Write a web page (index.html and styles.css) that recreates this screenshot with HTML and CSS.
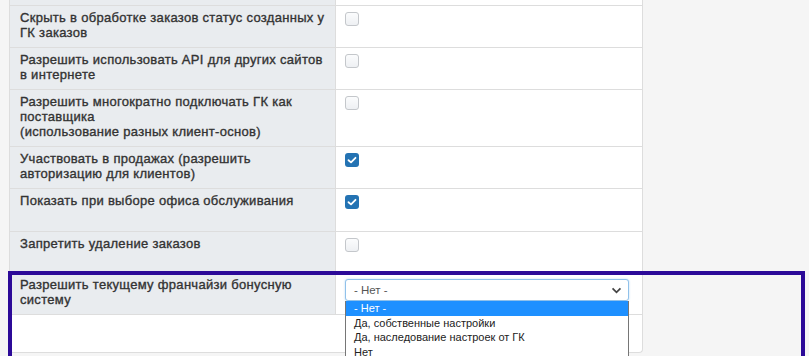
FILE: index.html
```html
<!DOCTYPE html>
<html lang="ru">
<head>
<meta charset="utf-8">
<title>Настройки</title>
<link rel="stylesheet" href="styles.css">
</head>
<body>
<div class="panel">
  <table class="settings">
    <tr class="cut"><td class="lbl"></td><td class="val"></td></tr>
    <tr>
      <td class="lbl"><div class="txt">Скрыть в обработке заказов статус созданных у ГК заказов</div></td>
      <td class="val"><span class="cb"></span></td>
    </tr>
    <tr>
      <td class="lbl"><div class="txt">Разрешить использовать API для других сайтов в интернете</div></td>
      <td class="val"><span class="cb"></span></td>
    </tr>
    <tr>
      <td class="lbl"><div class="txt">Разрешить многократно подключать ГК как поставщика<br>(использование разных клиент-основ)</div></td>
      <td class="val"><span class="cb"></span></td>
    </tr>
    <tr>
      <td class="lbl"><div class="txt">Участвовать в продажах (разрешить авторизацию для клиентов)</div></td>
      <td class="val"><span class="cb on"><svg viewBox="0 0 14 14" width="14" height="14"><polyline points="3.5,7.2 6,9.4 10.5,4.8" fill="none" stroke="#fff" stroke-width="1.8" stroke-linecap="round" stroke-linejoin="round"/></svg></span></td>
    </tr>
    <tr>
      <td class="lbl"><div class="txt tall">Показать при выборе офиса обслуживания</div></td>
      <td class="val"><span class="cb on"><svg viewBox="0 0 14 14" width="14" height="14"><polyline points="3.5,7.2 6,9.4 10.5,4.8" fill="none" stroke="#fff" stroke-width="1.8" stroke-linecap="round" stroke-linejoin="round"/></svg></span></td>
    </tr>
    <tr>
      <td class="lbl"><div class="txt short">Запретить удаление заказов</div></td>
      <td class="val"><span class="cb"></span></td>
    </tr>
    <tr>
      <td class="lbl"><div class="txt">Разрешить текущему франчайзи бонусную систему</div></td>
      <td class="val">
        <div class="select-wrap">
          <div class="select">
            <span>- Нет -</span>
            <svg class="chev" viewBox="0 0 12 8" width="11" height="7"><polyline points="1.5,1.5 6,6 10.5,1.5" fill="none" stroke="#444" stroke-width="2"/></svg>
          </div>
          <ul class="options">
            <li class="sel">- Нет -</li>
            <li>Да, собственные настройки</li>
            <li>Да, наследование настроек от ГК</li>
            <li>Нет</li>
          </ul>
        </div>
      </td>
    </tr>
  </table>
  <div class="footer"></div>
</div>
<div class="highlight"></div>
</body>
</html>
```
FILE: styles.css
```css
html, body {
  margin: 0;
  padding: 0;
}
body {
  background: #f5f5f5;
  font-family: "Liberation Sans", Arial, sans-serif;
  color: #333;
  height: 356px;
  overflow: hidden;
  position: relative;
}
.panel {
  margin-left: 9px;
  width: 632px;
  background: #fff;
  border: 1px solid #ddd;
  border-top: none;
  border-radius: 0 0 4px 4px;
}
.settings {
  border-collapse: collapse;
  width: 100%;
  table-layout: fixed;
}
.settings td {
  border-bottom: 1px solid #ddd;
  vertical-align: top;
  padding: 0;
}
.settings td.lbl {
  width: 325px;
  background: #e9ecef;
  border-right: 1px solid #ddd;
  padding: 4px 4px 7px 10px;
  font-size: 13px;
  font-weight: 400;
  letter-spacing: 0.3px;
  -webkit-text-stroke: 0.35px #333;
  line-height: 15px;
  color: #333;
}
.settings td.val {
  background: #fff;
  padding: 6px 11px 0 9px;
}
.settings tr.cut td {
  height: 5px;
  padding: 0;
}
.txt {
  min-height: 30px;
}
.txt.tall { min-height: 31px; }
.txt.short { min-height: 29px; }

.cb {
  display: block;
  width: 12px;
  height: 12px;
  border: 1px solid #c4c7cb;
  border-radius: 3px;
  background: linear-gradient(#fbfcfd, #eef0f3);
}
.cb.on {
  width: 14px;
  height: 14px;
  border: none;
  background: #2473b3;
  border-radius: 3px;
}
.cb.on svg { display: block; }

.select-wrap {
  position: relative;
  width: 284px;
}
.select {
  box-sizing: border-box;
  height: 22px;
  border: 1px solid #90c1ea;
  border-radius: 3px;
  box-shadow: 0 0 2px rgba(102, 175, 233, 0.5);
  background: #fff;
  display: flex;
  align-items: center;
  justify-content: space-between;
  padding: 0 6px 0 8px;
  font-size: 11.5px;
  color: #555;
}
.chev { display: block; }
.options {
  position: absolute;
  left: 0;
  top: 22px;
  width: 284px;
  box-sizing: border-box;
  margin: 0;
  padding: 0;
  list-style: none;
  background: #fff;
  border: 1px solid #767676;
  border-top: none;
  font-size: 11px;
  line-height: 14.5px;
  color: #222;
  z-index: 2;
}
.options li {
  padding: 0 0 0 8px;
  white-space: nowrap;
}
.options li.sel {
  background: #1e90ff;
  color: #fff;
}
.footer {
  height: 37px;
}
.highlight {
  position: absolute;
  left: 8px;
  top: 271px;
  width: 797px;
  height: 120px;
  box-sizing: border-box;
  border: 4px solid #2c0a98;
  pointer-events: none;
}
```
